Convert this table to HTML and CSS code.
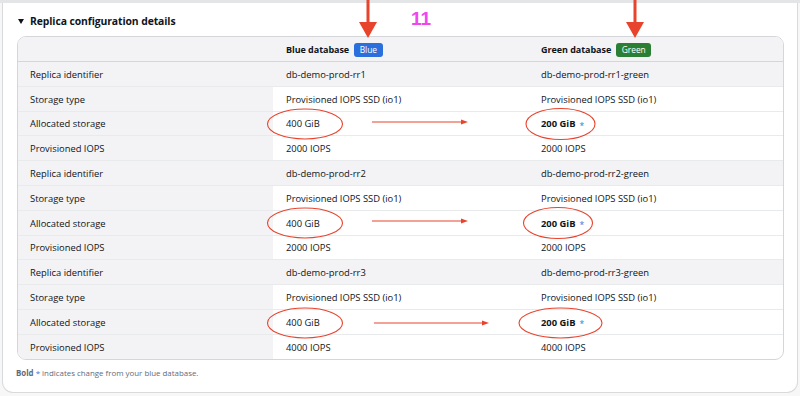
FILE: index.html
```html
<!DOCTYPE html>
<html lang="en">
<head>
<meta charset="utf-8">
<title>Replica configuration details</title>
<link rel="stylesheet" href="styles.css">
</head>
<body>
<div class="page">
  <section class="card">
    <h2 class="title"><span class="caret"></span>Replica configuration details</h2>
    <div class="cfg">
      <div class="cell head label"></div>
      <div class="cell head"><b>Blue database</b><span class="badge badge-blue">Blue</span></div>
      <div class="cell head"><b>Green database</b><span class="badge badge-green">Green</span></div>

      <div class="cell label grp">Replica identifier</div>
      <div class="cell grp">db-demo-prod-rr1</div>
      <div class="cell grp">db-demo-prod-rr1-green</div>
      <div class="cell label">Storage type</div>
      <div class="cell">Provisioned IOPS SSD (io1)</div>
      <div class="cell">Provisioned IOPS SSD (io1)</div>
      <div class="cell label">Allocated storage</div>
      <div class="cell">400 GiB</div>
      <div class="cell"><b>200 GiB</b><span class="star">*</span></div>
      <div class="cell label">Provisioned IOPS</div>
      <div class="cell">2000 IOPS</div>
      <div class="cell">2000 IOPS</div>

      <div class="cell label grp">Replica identifier</div>
      <div class="cell grp">db-demo-prod-rr2</div>
      <div class="cell grp">db-demo-prod-rr2-green</div>
      <div class="cell label">Storage type</div>
      <div class="cell">Provisioned IOPS SSD (io1)</div>
      <div class="cell">Provisioned IOPS SSD (io1)</div>
      <div class="cell label">Allocated storage</div>
      <div class="cell">400 GiB</div>
      <div class="cell"><b>200 GiB</b><span class="star">*</span></div>
      <div class="cell label">Provisioned IOPS</div>
      <div class="cell">2000 IOPS</div>
      <div class="cell">2000 IOPS</div>

      <div class="cell label grp">Replica identifier</div>
      <div class="cell grp">db-demo-prod-rr3</div>
      <div class="cell grp">db-demo-prod-rr3-green</div>
      <div class="cell label">Storage type</div>
      <div class="cell">Provisioned IOPS SSD (io1)</div>
      <div class="cell">Provisioned IOPS SSD (io1)</div>
      <div class="cell label">Allocated storage</div>
      <div class="cell">400 GiB</div>
      <div class="cell"><b>200 GiB</b><span class="star">*</span></div>
      <div class="cell label last">Provisioned IOPS</div>
      <div class="cell last">4000 IOPS</div>
      <div class="cell last">4000 IOPS</div>
    </div>
    <p class="note"><b>Bold</b> <span class="star">*</span> indicates change from your blue database.</p>
  </section>

  <div class="step">11</div>

  <svg class="annot" width="800" height="396" viewBox="0 0 800 396" aria-hidden="true">
    <g fill="#e8432d" stroke="none">
      <rect x="366.5" y="0" width="3" height="23"/>
      <polygon points="359,22 377,22 368,38"/>
      <rect x="633.5" y="0" width="3" height="23"/>
      <polygon points="626,22 644,22 635,38"/>
    </g>
    <g fill="none" stroke="#e8432d" stroke-width="1.1">
      <ellipse cx="305" cy="124" rx="37.5" ry="15"/>
      <ellipse cx="560.5" cy="124" rx="34.5" ry="15.5"/>
      <line x1="372" y1="122" x2="462" y2="122"/>
      <ellipse cx="305" cy="223" rx="37.5" ry="15"/>
      <ellipse cx="558" cy="223" rx="34.5" ry="15.5"/>
      <line x1="372" y1="221" x2="462" y2="221"/>
      <ellipse cx="305" cy="323" rx="37.5" ry="15"/>
      <ellipse cx="560.5" cy="323" rx="41.5" ry="15"/>
      <line x1="374" y1="323" x2="483" y2="323"/>
    </g>
    <g fill="#e8432d">
      <polygon points="461,119.5 468,122 461,124.5"/>
      <polygon points="461,218.5 468,221 461,223.5"/>
      <polygon points="482,320.5 489,323 482,325.5"/>
    </g>
  </svg>
</div>
</body>
</html>
```
FILE: styles.css
```css
* { box-sizing: border-box; }

html, body {
  margin: 0;
  padding: 0;
}

body {
  background: #f7f7f8;
  font-family: "Open Sans", "Liberation Sans", Arial, sans-serif;
  color: #0f141a;
}

.page {
  position: relative;
  width: 800px;
  height: 396px;
  padding: 3px 2px 0 2px;
  background: linear-gradient(#e4e5e7 0, #e4e5e7 3px, #f7f7f8 3px);
}

.card {
  background: #ffffff;
  border: 1px solid #d9dadc;
  border-top: none;
  border-radius: 0 0 11px 11px;
  padding: 0 13px 0 14px;
  height: 390px;
}

.title {
  display: flex;
  align-items: center;
  margin: 0;
  padding: 3px 0 0 1px;
  height: 33px;
  font-size: 10.4px;
  font-weight: 700;
  line-height: 14px;
  letter-spacing: -0.1px;
}

.caret {
  width: 0;
  height: 0;
  border-left: 3.5px solid transparent;
  border-right: 3.5px solid transparent;
  border-top: 5.5px solid #0f141a;
  margin-right: 6px;
  margin-top: 1px;
}

.cfg {
  display: grid;
  grid-template-columns: 1fr 1fr 1fr;
  border: 1px solid #d5d6d9;
  border-radius: 9px;
  overflow: hidden;
  font-size: 9.4px;
  background: #ffffff;
}

.cell {
  display: flex;
  align-items: center;
  height: 24.8px;
  padding: 1px 8px 0 12px;
  border-bottom: 1px solid #e9eaec;
  white-space: nowrap;
}

.cell.head {
  height: 25px;
  background: #f3f3f5;
  border-bottom: 1px solid #d5d6d9;
  padding-left: 13px;
}

.cell.head b {
  font-size: 9px;
  font-weight: 700;
  letter-spacing: -0.05px;
}

.cell.label {
  background: #f3f3f5;
}

.cell.grp {
  background: #f3f3f5;
}

.cell + .cell:not(.label) {
  padding-left: 13px;
}

.cell.last {
  border-bottom: none;
  height: 24.3px;
}

.cell b {
  font-weight: 700;
}

.badge {
  display: inline-block;
  margin-left: 5px;
  height: 14px;
  line-height: 14px;
  padding: 0 5.5px;
  border-radius: 3px;
  color: #ffffff;
  font-size: 8.4px;
  font-weight: 400;
}

.badge-blue {
  background: #2a6fdb;
}

.badge-green {
  background: #2b7f34;
}

.star {
  color: #2f7be0;
  margin-left: 4px;
  font-size: 8.5px;
  font-weight: 400;
  align-self: flex-start;
  margin-top: 7px;
}

.note {
  margin: 7px 0 0 -1px;
  font-size: 7.9px;
  color: #5f6b7a;
  line-height: 12px;
}

.note b {
  color: #5f6b7a;
}

.note .star {
  margin-left: 0;
  margin-top: 0;
  font-size: 8px;
}

.step {
  position: absolute;
  left: 411px;
  top: 8px;
  font-family: "Liberation Sans", Arial, sans-serif;
  font-size: 19px;
  font-weight: 700;
  color: #f046f0;
}

.annot {
  position: absolute;
  left: 0;
  top: 0;
  pointer-events: none;
}
```
